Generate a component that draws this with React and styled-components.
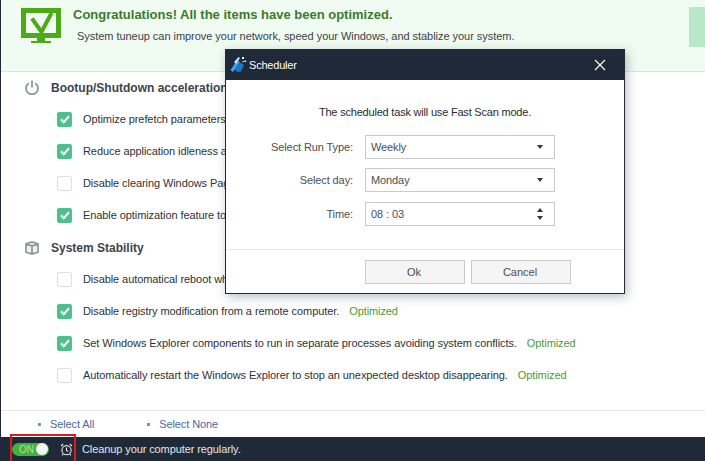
import React from 'react';
import styled, { createGlobalStyle } from 'styled-components';

const sections = [
  {
    title: 'Bootup/Shutdown acceleration',
    icon: 'power',
    items: [
      { label: 'Optimize prefetch parameters', checked: true },
      { label: 'Reduce application idleness at', checked: true },
      { label: 'Disable clearing Windows Page', checked: false },
      { label: 'Enable optimization feature to', checked: true },
    ],
  },
  {
    title: 'System Stability',
    icon: 'box',
    items: [
      { label: 'Disable automatical reboot when', checked: false },
      { label: 'Disable registry modification from a remote computer.', checked: true, done: true },
      { label: 'Set Windows Explorer components to run in separate processes avoiding system conflicts.', checked: true, done: true },
      { label: 'Automatically restart the Windows Explorer to stop an unexpected desktop disappearing.', checked: false, done: true },
    ],
  },
];

const fields = [
  { label: 'Select Run Type:', value: 'Weekly', kind: 'select' },
  { label: 'Select day:', value: 'Monday', kind: 'select' },
  { label: 'Time:', value: '08 : 03', kind: 'spin' },
];

const PowerIcon = () => (
  <svg width="14" height="15" viewBox="0 0 14 15" fill="none" stroke="#8d949c" strokeWidth="1.7">
    <path d="M3.9 3.2a6 6 0 1 0 6.2 0" />
    <path d="M7 0.5v7" />
  </svg>
);

const BoxIcon = () => (
  <svg width="14" height="14" viewBox="0 0 14 14" fill="none" stroke="#8d949c" strokeWidth="1.7">
    <path d="M1 2.8L7 1l6 1.8v8.4L7 13l-6-1.8z" fill="#eef0f1" />
    <path d="M1 3.4l6 1.4 6-1.4M7 4.8V13" />
  </svg>
);

const MonitorIcon = () => (
  <svg width="40" height="35" viewBox="0 0 40 35">
    <path d="M0 0h40v30H0z" fill="#4caa19" />
    <path d="M5 5h30v20H5z" fill="#f1fcf2" />
    <path d="M16 30h8v3h-8zM10 33h20v2H10z" fill="#4caa19" />
    <path d="M11 10.5l9.5 13.5L30.5 5" fill="none" stroke="#4caa19" strokeWidth="4" />
  </svg>
);

const AlarmIcon = () => (
  <svg width="13" height="13" viewBox="0 0 13 13" fill="none" stroke="#e4e6e8" strokeWidth="1.1">
    <circle cx="6.5" cy="7.2" r="4.6" />
    <path d="M6.5 4.6v2.8l1.8 1M1 3L3.2 1M12 3L9.8 1M3.2 11l-1 1.4M9.8 11l1 1.4" />
  </svg>
);

const LogoIcon = () => (
  <svg width="17" height="17" viewBox="0 0 17 17">
    <path d="M0.5 14L7 4.5l3 1.5L3 16z" fill="#3aa6ee" />
    <path d="M5 13l5-6.5 4 2.5-3 6.5-4 0.5z" fill="#1a78c8" />
    <path d="M4 6L8.5 1l1.5 1L6 8z" fill="#bfe6fb" />
    <path d="M12 1h2v2h-2zM14.5 4.5h1.6v1.6h-1.6zM12.5 5h1.2v1.2h-1.2z" fill="#e8f6ff" />
  </svg>
);

const App = () => (
  <Page>
    <GlobalStyle />
    <Banner>
      <MonitorIcon />
      <BannerText>
        <Headline>Congratulations! All the items have been optimized.</Headline>
        <Subline>System tuneup can improve your network, speed your Windows, and stablize your system.</Subline>
      </BannerText>
      <BannerTab />
    </Banner>
    <Content>
      {sections.map((section) => (
        <Section key={section.title}>
          <SectionTitle>
            {section.icon === 'power' ? <PowerIcon /> : <BoxIcon />}
            <span>{section.title}</span>
          </SectionTitle>
          {section.items.map((item) => (
            <Row key={item.label}>
              <Check $checked={item.checked}>
                {item.checked && (
                  <svg width="10" height="9" viewBox="0 0 10 9" fill="none" stroke="#fff" strokeWidth="2">
                    <path d="M1 4.2l2.8 3L9 1.2" />
                  </svg>
                )}
              </Check>
              <RowLabel>{item.label}</RowLabel>
              {item.done && <Optimized>Optimized</Optimized>}
            </Row>
          ))}
        </Section>
      ))}
    </Content>
    <SelectBar>
      <SelectLink>Select All</SelectLink>
      <SelectLink>Select None</SelectLink>
    </SelectBar>
    <StatusBar>
      <Toggle>
        <ToggleText>ON</ToggleText>
        <Knob />
      </Toggle>
      <AlarmIcon />
      <StatusText>Cleanup your computer regularly.</StatusText>
      <Highlight />
    </StatusBar>
    <Dialog>
      <DialogTitle>
        <LogoIcon />
        <DialogName>Scheduler</DialogName>
        <svg width="12" height="12" viewBox="0 0 12 12" stroke="#fff" strokeWidth="1.2">
          <path d="M1 1l10 10M11 1L1 11" />
        </svg>
      </DialogTitle>
      <DialogBody>
        <Notice>The scheduled task will use Fast Scan mode.</Notice>
        {fields.map((field) => (
          <FieldRow key={field.label}>
            <FieldLabel>{field.label}</FieldLabel>
            <FieldBox>
              <span>{field.value}</span>
              {field.kind === 'select' ? (
                <Arrow />
              ) : (
                <Spin>
                  <Arrow $up />
                  <Arrow />
                </Spin>
              )}
            </FieldBox>
          </FieldRow>
        ))}
      </DialogBody>
      <DialogFooter>
        <DialogButton>Ok</DialogButton>
        <DialogButton>Cancel</DialogButton>
      </DialogFooter>
    </Dialog>
  </Page>
);
export default App;

const GlobalStyle = createGlobalStyle`
  html, body {
    margin: 0;
    padding: 0;
    background: #fff;
  }
  * {
    box-sizing: border-box;
  }
`;
const Page = styled.div`
  position: relative;
  width: 705px;
  height: 461px;
  overflow: hidden;
  display: flex;
  flex-direction: column;
  background: #fff;
  border-left: 1px solid #1f2937;
  font-family: 'Liberation Sans', Arial, sans-serif;
  font-size: 11px;
  letter-spacing: -0.1px;
  color: #2e3238;
`;
const Banner = styled.header`
  height: 72px;
  flex: none;
  display: flex;
  align-items: flex-start;
  padding: 8px 0 0 20px;
  background: #f0fcf1;
  border-bottom: 1px solid #d5eadb;
`;
const BannerText = styled.div`
  margin-left: 12px;
  margin-top: -1px;
`;
const Headline = styled.div`
  font-size: 13px;
  font-weight: 700;
  letter-spacing: 0;
  line-height: 16px;
  color: #3c7a2c;
`;
const Subline = styled.div`
  margin: 5px 0 0 4px;
  line-height: 16px;
  letter-spacing: -0.04px;
  color: #3c4148;
`;
const BannerTab = styled.div`
  width: 16px;
  height: 40px;
  margin: -1px 0 0 auto;
  background: #b9e8c8;
`;
const Content = styled.main`
  flex: 1;
`;
const Section = styled.section`
  padding-left: 24px;
  & + & {
    margin-top: 1px;
  }
`;
const SectionTitle = styled.h2`
  margin: 0;
  height: 31px;
  display: flex;
  align-items: center;
  gap: 12px;
  font-size: 12px;
  font-weight: 700;
  letter-spacing: 0;
  color: #3d434b;
`;
const Row = styled.div`
  height: 32px;
  display: flex;
  align-items: center;
  padding-left: 32px;
`;
const Check = styled.span`
  width: 15px;
  height: 15px;
  flex: none;
  display: flex;
  align-items: center;
  justify-content: center;
  border-radius: 2px;
  background: ${(p) => (p.$checked ? '#4fc08d' : '#fff')};
  border: 1px solid ${(p) => (p.$checked ? '#4fc08d' : '#dcdfe2')};
`;
const RowLabel = styled.span`
  margin-left: 11px;
  white-space: nowrap;
  letter-spacing: -0.08px;
`;
const Optimized = styled.span`
  margin-left: 10px;
  color: #4b9a3a;
`;
const SelectBar = styled.div`
  height: 27px;
  flex: none;
  display: flex;
  align-items: center;
  gap: 53px;
  padding-left: 37px;
  border-top: 1px solid #e6e8ea;
`;
const SelectLink = styled.a`
  display: flex;
  align-items: center;
  gap: 9px;
  color: #4a6a9a;
  &::before {
    content: '';
    width: 3px;
    height: 3px;
    background: #7d93b5;
  }
`;
const StatusBar = styled.footer`
  position: relative;
  height: 24px;
  flex: none;
  display: flex;
  align-items: center;
  padding-left: 11px;
  background: #1f2937;
  color: #e4e6e8;
`;
const Toggle = styled.div`
  width: 37px;
  height: 13px;
  display: flex;
  align-items: center;
  justify-content: space-between;
  padding: 0 1px 0 7px;
  margin-right: 11px;
  border-radius: 7px;
  background: #43b03f;
`;
const ToggleText = styled.span`
  font-size: 10px;
  color: #a9e6a3;
`;
const Knob = styled.span`
  width: 12px;
  height: 12px;
  border-radius: 50%;
  background: #f4f6f4;
`;
const StatusText = styled.span`
  margin-left: 9px;
`;
const Highlight = styled.div`
  position: absolute;
  left: 9px;
  top: -3px;
  width: 66px;
  height: 27px;
  border: 2px solid #d81e1e;
  border-bottom-width: 0;
`;
const Dialog = styled.div`
  position: absolute;
  left: 224px;
  top: 49px;
  width: 400px;
  height: 245px;
  display: flex;
  flex-direction: column;
  background: #fff;
  border: 1px solid #1f2937;
  box-shadow: 2px 3px 10px rgba(60, 70, 90, 0.35);
`;
const DialogTitle = styled.div`
  height: 30px;
  flex: none;
  display: flex;
  align-items: center;
  padding: 0 18px 1px 4px;
  background: #1f2937;
  letter-spacing: -0.2px;
  color: #fff;
`;
const DialogName = styled.span`
  flex: 1;
  margin-left: 2px;
`;
const DialogBody = styled.div`
  flex: 1;
  padding-top: 24px;
`;
const Notice = styled.div`
  height: 16px;
  margin-bottom: 15px;
  line-height: 16px;
  text-align: center;
  letter-spacing: -0.2px;
  color: #2a2d31;
`;
const FieldRow = styled.div`
  height: 24px;
  margin-bottom: 9.4px;
  display: flex;
  align-items: center;
`;
const FieldLabel = styled.span`
  width: 127px;
  text-align: right;
  color: #4b4f55;
`;
const FieldBox = styled.div`
  width: 190px;
  height: 24px;
  margin-left: 12px;
  display: flex;
  align-items: center;
  justify-content: space-between;
  padding: 0 11px 0 5px;
  border: 1px solid #c8cacc;
  color: #4b4f55;
`;
const Arrow = styled.span`
  width: 0;
  height: 0;
  border-left: 3.5px solid transparent;
  border-right: 3.5px solid transparent;
  border-${(p) => (p.$up ? 'bottom' : 'top')}: 4px solid #33373c;
`;
const Spin = styled.span`
  display: flex;
  flex-direction: column;
  gap: 4px;
`;
const DialogFooter = styled.div`
  height: 44px;
  flex: none;
  display: flex;
  align-items: flex-start;
  gap: 6px;
  padding: 10px 0 0 139px;
  border-top: 1px solid #e6e8ea;
`;
const DialogButton = styled.button`
  width: 100px;
  height: 24px;
  padding: 0 2px 0 0;
  font: inherit;
  color: #4b4f55;
  background: #f5f5f5;
  border: 1px solid #c8cacc;
`;
